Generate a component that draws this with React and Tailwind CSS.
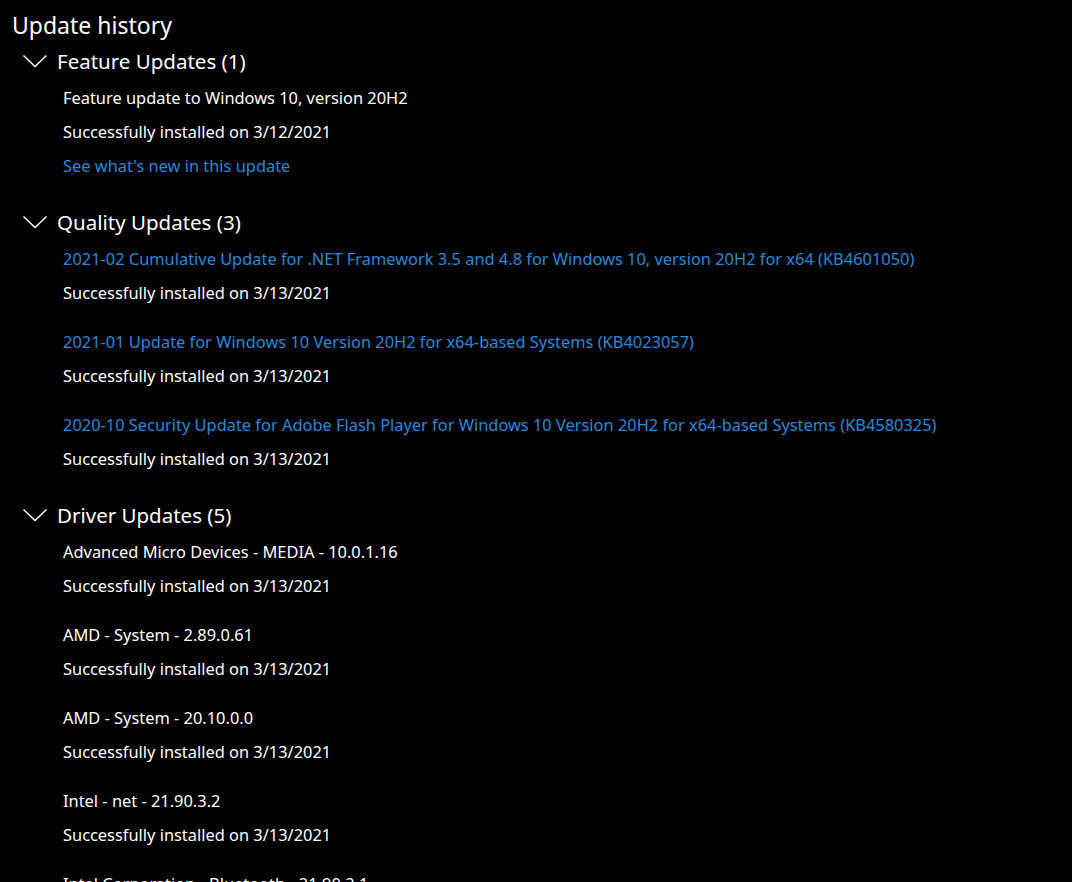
import React from "react";

const Chevron = () => (
  <svg width="26" height="14" viewBox="0 0 26 14" className="shrink-0">
    <path d="M1.5 1.5 L13 12.5 L24.5 1.5" fill="none" stroke="#ffffff" strokeWidth="1.5" />
  </svg>
);

const groups = [
  {
    title: "Feature Updates (1)",
    items: [
      { name: "Feature update to Windows 10, version 20H2", date: "3/12/2021", link: false, extra: "See what's new in this update" },
    ],
  },
  {
    title: "Quality Updates (3)",
    items: [
      { name: "2021-02 Cumulative Update for .NET Framework 3.5 and 4.8 for Windows 10, version 20H2 for x64 (KB4601050)", date: "3/13/2021", link: true },
      { name: "2021-01 Update for Windows 10 Version 20H2 for x64-based Systems (KB4023057)", date: "3/13/2021", link: true },
      { name: "2020-10 Security Update for Adobe Flash Player for Windows 10 Version 20H2 for x64-based Systems (KB4580325)", date: "3/13/2021", link: true },
    ],
  },
  {
    title: "Driver Updates (5)",
    items: [
      { name: "Advanced Micro Devices - MEDIA - 10.0.1.16", date: "3/13/2021" },
      { name: "AMD - System - 2.89.0.61", date: "3/13/2021" },
      { name: "AMD - System - 20.10.0.0", date: "3/13/2021" },
      { name: "Intel - net - 21.90.3.2", date: "3/13/2021" },
      { name: "Intel Corporation - Bluetooth - 21.90.2.1", date: "3/13/2021" },
    ],
  },
];

export default function App() {
  return (
    <div
      className="w-[1072px] h-[882px] overflow-hidden bg-black text-white"
      style={{ fontFamily: '"Segoe UI", "Noto Sans", sans-serif' }}
    >
      <div className="h-[41px] pl-[12px] flex items-end">
        <h1 className="text-[23px] leading-[32px] font-normal">Update history</h1>
      </div>
      {groups.map((g, gi) => (
        <div key={gi} className={gi > 0 ? "mt-[19px]" : ""}>
          <div className="h-[40px] flex items-center pl-[22px]">
            <Chevron />
            <span className="ml-[9px] text-[20.5px] leading-[28px]">{g.title}</span>
          </div>
          <div className="flex flex-col gap-[15px] pl-[63px]">
            {g.items.map((it, ii) => (
              <div key={ii} className="flex flex-col text-[16.4px]">
                <div className={"h-[34px] flex items-center whitespace-nowrap " + (it.link ? "text-[#2b88d8]" : "text-white")}>
                  {it.name}
                </div>
                <div className="h-[34px] flex items-center whitespace-nowrap">
                  Successfully installed on {it.date}
                </div>
                {it.extra && (
                  <div className="h-[34px] flex items-center whitespace-nowrap text-[#2b88d8]">{it.extra}</div>
                )}
              </div>
            ))}
          </div>
        </div>
      ))}
    </div>
  );
}
